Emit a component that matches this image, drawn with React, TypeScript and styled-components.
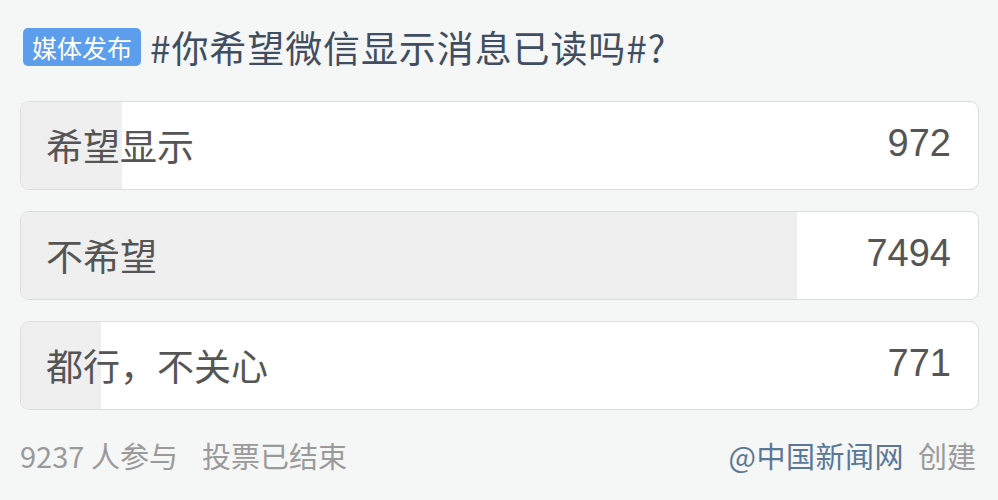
import styled, { createGlobalStyle } from 'styled-components';

const GlobalStyle = createGlobalStyle`
  html, body {
    margin: 0;
    padding: 0;
    background: #f5f6f6;
  }
  body {
    font-family: "Noto Sans CJK SC", "Noto Sans", sans-serif;
  }
`;

const Page = styled.div`
  width: 998px;
  height: 500px;
  box-sizing: border-box;
  padding: 28px 19px 0 20px;
  background: #f5f6f6;
  overflow: hidden;
`;

const Header = styled.div`
  display: flex;
  align-items: center;
  gap: 9px;
  height: 38px;
  padding-left: 3px;
`;

const Badge = styled.span`
  display: inline-flex;
  align-items: center;
  justify-content: center;
  height: 38px;
  padding: 0 9px;
  border-radius: 5px;
  background: #5c9eeb;
  color: #fff;
  font-size: 25px;
  line-height: 1;
`;

const Title = styled.h1`
  margin: 0;
  font-size: 37px;
  font-weight: 400;
  color: #414e61;
  line-height: 1;
  letter-spacing: 0.9px;
`;

const Options = styled.div`
  display: flex;
  flex-direction: column;
  gap: 21px;
  margin-top: 35px;
`;

const Option = styled.div`
  position: relative;
  height: 89px;
  box-sizing: border-box;
  border: 1.5px solid #dcdcdc;
  border-radius: 9px;
  background: #fff;
  overflow: hidden;
`;

const Fill = styled.div`
  position: absolute;
  left: 0;
  top: 0;
  bottom: 0;
  background: #efefef;
`;

const OptionRow = styled.div`
  position: relative;
  display: flex;
  align-items: center;
  justify-content: space-between;
  height: 100%;
  padding: 0 27px 0 25px;
`;

const Label = styled.span`
  font-size: 37px;
  color: #555;
  line-height: 1;
`;

const Count = styled.span`
  font-family: "Liberation Sans", Arial, sans-serif;
  font-size: 38px;
  color: #555;
  line-height: 1;
  margin-top: -6px;
`;

const Footer = styled.div`
  display: flex;
  justify-content: space-between;
  align-items: center;
  margin-top: 24px;
  padding-right: 3px;
  font-size: 29px;
  color: #9a9a9a;
`;

const Muted = styled.span`
  color: #9a9a9a;
`;

const Gap = styled.span`
  display: inline-block;
  width: 24px;
`;

const Creator = styled.span`
  color: #5a7895;
  margin-right: 14px;
  letter-spacing: 0.5px;
`;

const options = [
  { label: '希望显示', count: 972 },
  { label: '不希望', count: 7494 },
  { label: '都行，不关心', count: 771 },
];

const total = 9237;

export default function App() {
  return (
    <Page>
      <GlobalStyle />
      <Header>
        <Badge>媒体发布</Badge>
        <Title>#你希望微信显示消息已读吗#?</Title>
      </Header>
      <Options>
        {options.map(o => (
          <Option key={o.label}>
            <Fill style={{ width: `${(o.count / total) * 100}%` }} />
            <OptionRow>
              <Label>{o.label}</Label>
              <Count>{o.count}</Count>
            </OptionRow>
          </Option>
        ))}
      </Options>
      <Footer>
        <Muted>
          9237 人参与<Gap />投票已结束
        </Muted>
        <span>
          <Creator>@中国新闻网</Creator>
          <Muted>创建</Muted>
        </span>
      </Footer>
    </Page>
  );
}
